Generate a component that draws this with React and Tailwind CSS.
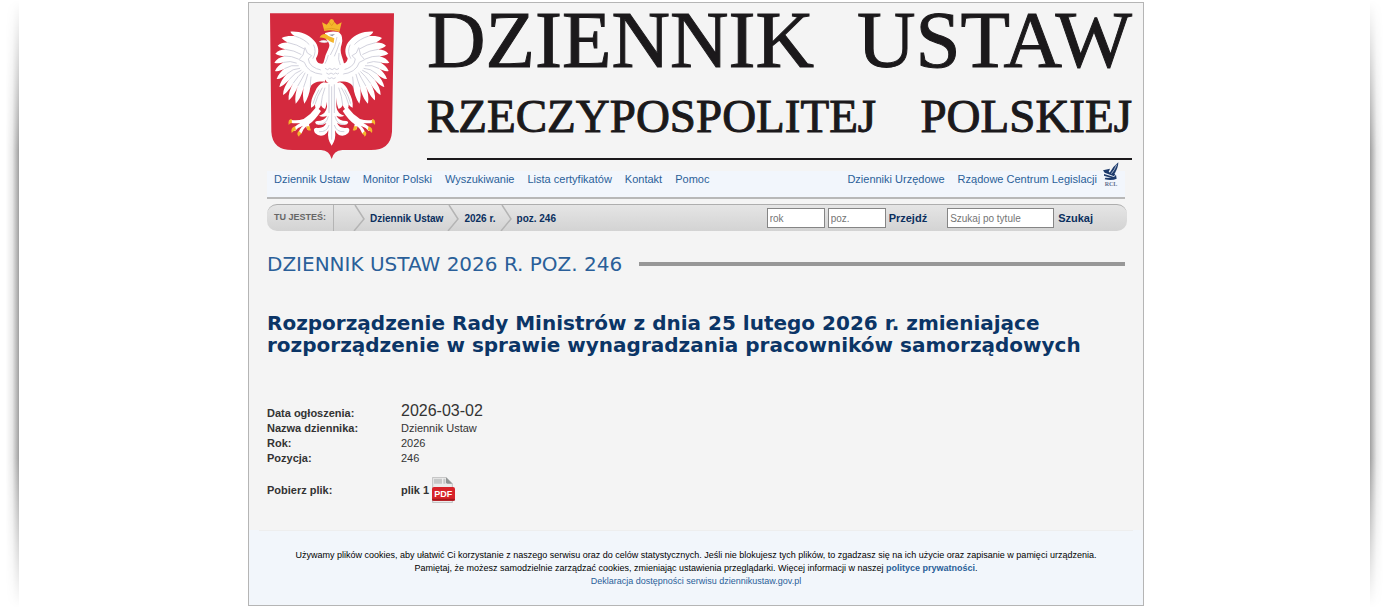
const menuLinks = [
  "Dziennik Ustaw",
  "Monitor Polski",
  "Wyszukiwanie",
  "Lista certyfikatów",
  "Kontakt",
  "Pomoc",
];

const crumbs = ["Dziennik Ustaw", "2026 r.", "poz. 246"];

const details = [
  { label: "Nazwa dziennika:", value: "Dziennik Ustaw" },
  { label: "Rok:", value: "2026" },
  { label: "Pozycja:", value: "246" },
];

// One half of the eagle, mirrored for the other side
function Wing() {
  return (
    <>
      <path
        fill="#fff"
        d="M240 190 C226 196 214 190 213 176 C224 160 222 138 206 122 C190 104 164 94 136 96 C140 104 146 108 152 110
           C136 108 122 109 110 115 C116 122 122 126 130 129 C116 128 106 131 98 138 C104 144 112 147 122 149
           C108 150 98 154 91 162 C98 167 108 169 118 169 C104 173 94 179 88 189 C96 192 106 191 116 188
           C104 195 95 203 90 214 C99 216 110 212 120 206 C108 215 99 226 95 238 C104 239 115 232 126 222
           C114 235 105 248 103 262 C112 260 124 250 134 238 C122 254 114 270 114 286 C124 281 136 266 145 250
           C135 268 129 285 131 302 C142 294 152 276 159 258 C152 276 149 294 152 312 C163 302 172 282 176 262
           C173 280 173 296 178 312 C188 298 194 280 196 262 C202 250 216 244 240 246 Z"
      />
      <path
        fill="none"
        stroke="#c9c9d6"
        strokeWidth="2.5"
        strokeLinecap="round"
        d="M152 110 Q178 118 192 134 M130 129 Q156 134 178 148 M122 149 Q148 152 168 164 M118 169 Q140 168 160 178
           M116 188 Q136 182 154 190 M120 206 Q140 194 160 198 M126 222 Q144 206 164 206 M134 238 Q150 218 168 212
           M145 250 Q160 228 174 216 M159 258 Q172 236 180 220 M176 262 Q184 240 188 224 M196 262 Q196 246 198 232
           M206 136 Q216 156 204 176"
      />
      <path
        fill="none"
        stroke="#d3d3de"
        strokeWidth="3"
        d="M180 144 L187 160 L200 168 L190 178 Q192 204 232 212 M232 224 Q188 220 178 188 L162 180 L174 166 L180 144"
      />
      <path
        fill="#fff"
        d="M236 248 C224 252 216 262 210 276 C202 290 196 306 198 324 C204 322 208 318 210 314 C210 322 212 328 216 332
           C222 328 226 322 228 316 C230 322 234 326 240 328 C246 316 250 288 250 250 Z"
      />
      <path
        fill="none"
        stroke="#c9c9d6"
        strokeWidth="2.5"
        d="M232 264 Q216 290 210 314 M240 264 Q230 290 228 316 M222 270 Q210 290 204 312"
      />
      <path
        fill="#fff"
        d="M214 322 Q198 344 176 358 Q156 364 136 360 Q130 366 138 370 Q154 372 166 370 Q154 376 144 386 Q142 394 150 394
           Q160 382 174 378 Q162 388 160 402 Q166 406 170 400 Q174 388 184 380 Q184 390 192 392 Q196 386 192 374
           Q210 362 228 334 Z"
      />
      <path
        fill="#f5b62c"
        d="M140 358 Q128 358 131 376 Q134 370 141 369 Z M150 380 Q136 384 140 400 Q144 394 153 391 Z
           M162 394 Q152 402 162 411 Q163 404 170 402 Z M185 380 Q184 396 198 392 Q196 388 194 380 Z"
      />
    </>
  );
}

function CoatOfArms() {
  return (
    <svg
      viewBox="75 40 372 438"
      className="h-[146px] w-[124px] shrink-0"
      role="img"
      aria-label="Godło Rzeczypospolitej Polskiej"
    >
      <path
        fill="#d42a3e"
        d="M75 41 H447 L441 396 Q437 452 376 451 H292 Q266 453 260 478 Q254 453 228 451 H144 Q82 452 79 396 Z"
      />
      <Wing />
      <g transform="translate(521 0) scale(-1 1)">
        <Wing />
      </g>
      {/* Tail */}
      <path
        fill="#fff"
        d="M246 250 L246 322 Q242 344 222 348 Q234 354 246 348 Q238 364 216 364 Q206 366 214 374 Q230 380 244 370
           Q236 388 214 384 Q202 386 210 400 Q222 412 238 406 Q246 402 250 392 Q246 420 260 438
           Q274 420 270 392 Q274 402 282 406 Q298 412 310 400 Q318 386 306 384 Q284 388 276 370
           Q290 380 306 374 Q314 366 304 364 Q282 364 274 348 Q286 354 298 348 Q278 344 274 322 L274 250 Z"
      />
      <path
        fill="none"
        stroke="#c9c9d6"
        strokeWidth="2.5"
        d="M252 254 V340 M268 254 V340 M260 260 V420 M250 350 Q244 376 222 374 M270 350 Q276 376 298 374
           M252 376 Q246 398 222 396 M268 376 Q274 398 298 396"
      />
      {/* Head, neck and breast */}
      <path
        fill="#fff"
        d="M240 100 Q262 92 282 98 Q296 110 290 134 Q284 150 290 168 Q296 184 300 204 Q292 240 276 250
           Q260 256 246 248 Q232 232 226 206 Q232 196 236 188 Q240 166 250 148 Q256 136 250 128 Q240 118 240 100 Z"
      />
      <path
        fill="none"
        stroke="#c9c9d6"
        strokeWidth="2.5"
        d="M276 112 Q272 142 256 166 M284 128 Q276 152 268 170 M250 166 Q246 182 240 192 M240 206 q8 8 14 0 q8 8 14 0 q8 8 14 0
           M244 220 q8 8 14 0 q8 8 14 0 q6 6 10 0 M248 234 q6 6 12 0 q6 6 12 0 M282 160 Q278 180 286 196"
      />
      <path fill="#f5b62c" d="M224 114 Q228 102 242 103 L252 110 L268 116 L266 130 Q254 126 248 120 Q232 112 224 114 Z" />
      <path fill="#fff" stroke="#c9c9d6" d="M222 126 Q236 118 250 126 Q240 132 222 126 Z" />
      <path fill="#9a9aa8" d="M252 105 L270 103 L262 110 Z" />
      {/* Crown */}
      <path
        fill="#f5b62c"
        d="M238 94 L231 68 L245 75 L252 67 Q254 58 260 58 Q266 58 268 67 L276 75 L290 68 L283 97 Q260 88 238 94 Z"
      />
      <path fill="none" stroke="#d98f1d" strokeWidth="2" d="M238 89 Q260 82 283 91 M252 67 L260 78 L268 67" />
    </svg>
  );
}

function RclLogo() {
  return (
    <svg viewBox="0 0 54 72" className="h-[24px] w-[18px]" aria-hidden="true">
      <path
        fill="#1d3a6b"
        d="M49 1 Q49 16 38 35 L30 38 L22 34 Q32 14 49 1 Z M3 25 L24 20 L20 30 L40 37 L36 43 L8 32 Z
           M6 36 L36 45 L42 38 L44 50 Q30 57 8 52 L10 47 L28 48 L6 41 Z"
      />
      <path fill="none" stroke="#f2f6fc" strokeWidth="2" d="M44 8 Q38 24 28 35" />
      <text x="27" y="71" textAnchor="middle" className="fill-[#5f6f8f] font-['Liberation_Serif',serif] text-[18px] font-bold">
        RCL
      </text>
    </svg>
  );
}

function PdfIcon() {
  return (
    <svg viewBox="0 0 69 78" className="h-[26px] w-[23px]" role="img" aria-label="PDF">
      <path d="M2 1 H42 L61 20 V77 H2 Z" fill="#ececec" stroke="#a8a8a8" strokeWidth="2" />
      <path d="M6 5 H30 V20 H6 Z M34 5 H40 V20 H34 Z" fill="#c6c8c8" />
      <path d="M42 1 L61 20 H46 Q42 20 42 16 Z" fill="#8f9494" />
      <rect x="0" y="30" width="69" height="41" rx="6" fill="#d8232a" />
      <rect x="0" y="65" width="69" height="6" rx="3" fill="#a9161c" />
      <text x="34" y="60" textAnchor="middle" className="fill-white font-['Liberation_Sans',sans-serif] text-[27px] font-bold">
        PDF
      </text>
    </svg>
  );
}

function Chevron() {
  return (
    <svg viewBox="0 0 12 26" className="h-[26px] w-3 shrink-0" aria-hidden="true">
      <path d="M2 0 L11 14 L1 26" fill="none" stroke="#b4b4b4" strokeWidth="1.5" />
    </svg>
  );
}

function Header() {
  return (
    <header className="flex items-start gap-[33px] pt-[5px] pr-[11px] pl-[21px]">
      <a href="#" className="mt-[5px]">
        <CoatOfArms />
      </a>
      <div className="flex-1 font-['Liberation_Serif',serif] text-[#1b191b]">
        <div className="flex justify-between text-[81px] leading-[64px] [-webkit-text-stroke:1px_#1b191b]">
          <span>DZIENNIK</span>
          <span>USTAW</span>
        </div>
        <div className="mt-5 flex justify-between text-[47px] leading-[48px] [-webkit-text-stroke:1px_#1b191b]">
          <span>RZECZYPOSPOLITEJ</span>
          <span>POLSKIEJ</span>
        </div>
        <div className="mt-[18px] h-[2px] bg-[#1b191b]" />
      </div>
    </header>
  );
}

function Menu() {
  return (
    <nav className="mx-[18px] mt-[11px] flex h-7 items-start justify-between border-b-2 border-[#b8b8b8] bg-[#f2f6fc] pr-[5px] pl-[7px] text-[11px] leading-4 text-[#2a5f99]">
      <div className="flex gap-[13px]">
        {menuLinks.map((item) => (
          <a key={item} href="#">{item}</a>
        ))}
      </div>
      <div className="flex">
        <a href="#" className="mr-[13px]">Dzienniki Urzędowe</a>
        <a href="#">Rządowe Centrum Legislacji</a>
        <a href="#" className="-mt-[9px] ml-[5px]" aria-label="RCL">
          <RclLogo />
        </a>
      </div>
    </nav>
  );
}

function Breadcrumbs() {
  const field =
    "h-5 border border-[#858585] bg-white px-[2px] text-[10px] text-[#333] placeholder:text-[#757575]";

  return (
    <div className="mt-[5px] mr-4 ml-[18px] flex h-[27px] items-center justify-between rounded-[10px] border-t border-[#aeaeae] bg-linear-to-b from-[#e5e5e5] to-[#d3d3d3] pr-[34px] pl-[7px]">
      <div className="flex items-center text-[10px] font-bold text-[#0b2f5e]">
        <span className="text-[9px] text-[#666]">TU JESTEŚ:</span>
        <span className="mr-[19px] ml-[7px] h-[26px] w-px bg-[#b4b4b4]" />
        {crumbs.map((crumb) => (
          <div key={crumb} className="flex items-center">
            <Chevron />
            <a href="#" className="mr-1 ml-[5px]">{crumb}</a>
          </div>
        ))}
      </div>
      <div className="flex items-center text-[11px] font-bold text-[#0b2f5e]">
        <form className="mr-5 flex items-center gap-[3px]" onSubmit={(e) => e.preventDefault()}>
          <input aria-label="rok" placeholder="rok" className={`${field} w-[58px] font-normal`} />
          <input aria-label="poz." placeholder="poz." className={`${field} w-[58px] font-normal`} />
          <button>Przejdź</button>
        </form>
        <form className="flex items-center gap-1" onSubmit={(e) => e.preventDefault()}>
          <input
            aria-label="Szukaj po tytule"
            placeholder="Szukaj po tytule"
            className={`${field} w-[107px] font-normal`}
          />
          <button>Szukaj</button>
        </form>
      </div>
    </div>
  );
}

function Act() {
  return (
    <main className="px-[18px] pb-[27px] text-[11px] text-[#333]">
      <div className="mt-5 flex items-center gap-[17px]">
        <h2 className="font-['DejaVu_Sans',sans-serif] text-[20px] leading-[26px] text-[#2a5f99]">
          DZIENNIK USTAW 2026 R. POZ. 246
        </h2>
        <div className="h-1 flex-1 bg-[#979797]" />
      </div>

      <h1 className="mt-[35px] font-['DejaVu_Sans',sans-serif] text-[20px] leading-[22px] font-bold text-[#0b3566]">
        Rozporządzenie Rady Ministrów z dnia 25 lutego 2026 r. zmieniające
        rozporządzenie w sprawie wynagradzania pracowników samorządowych
      </h1>

      <table className="mt-11 text-left leading-[15px]">
        <tbody>
          <tr>
            <th className="w-[134px] align-bottom">Data ogłoszenia:</th>
            <td className="text-[16px] leading-[21px]">2026-03-02</td>
          </tr>
          {details.map(({ label, value }) => (
            <tr key={label}>
              <th>{label}</th>
              <td>{value}</td>
            </tr>
          ))}
          <tr>
            <th className="pt-[11px]">Pobierz plik:</th>
            <td className="pt-[11px] font-bold">
              <a href="#" className="flex items-center gap-[3px]">
                plik 1 <PdfIcon />
              </a>
            </td>
          </tr>
        </tbody>
      </table>
    </main>
  );
}

function Footer() {
  return (
    <footer className="bg-[#f2f6fb] pb-[17px] text-center text-[9px] leading-[13px] text-black">
      <div className="mx-[10px] mb-[18px] h-px bg-[#eeeeee]" />
      <p>
        Używamy plików cookies, aby ułatwić Ci korzystanie z naszego serwisu oraz do celów statystycznych. Jeśli nie
        blokujesz tych plików, to zgadzasz się na ich użycie oraz zapisanie w pamięci urządzenia.
      </p>
      <p>
        Pamiętaj, że możesz samodzielnie zarządzać cookies, zmieniając ustawienia przeglądarki. Więcej informacji w
        naszej <a href="#" className="font-bold text-[#2a5f99]">polityce prywatności</a>.
      </p>
      <a href="#" className="text-[#2a5f99]">Deklaracja dostępności serwisu dziennikustaw.gov.pl</a>
    </footer>
  );
}

export default function App() {
  return (
    <div className="flex min-h-screen justify-between bg-white font-['Liberation_Sans',sans-serif]">
      <div className="w-[19px] bg-linear-to-r from-white from-30% via-[#e8e8e8] via-65% to-[#a0a0a0] [mask-image:linear-gradient(to_bottom,transparent,black_150px,black_calc(100%-150px),transparent)]" />
      <div className="my-[2px] ml-[3px] w-[896px] self-start border border-[#b5b5b5] bg-[#f4f4f4]">
        <Header />
        <Menu />
        <Breadcrumbs />
        <Act />
        <Footer />
      </div>
      <div className="w-[19px] bg-linear-to-l from-white from-30% via-[#e8e8e8] via-65% to-[#a0a0a0] [mask-image:linear-gradient(to_bottom,transparent,black_150px,black_calc(100%-150px),transparent)]" />
    </div>
  );
}
